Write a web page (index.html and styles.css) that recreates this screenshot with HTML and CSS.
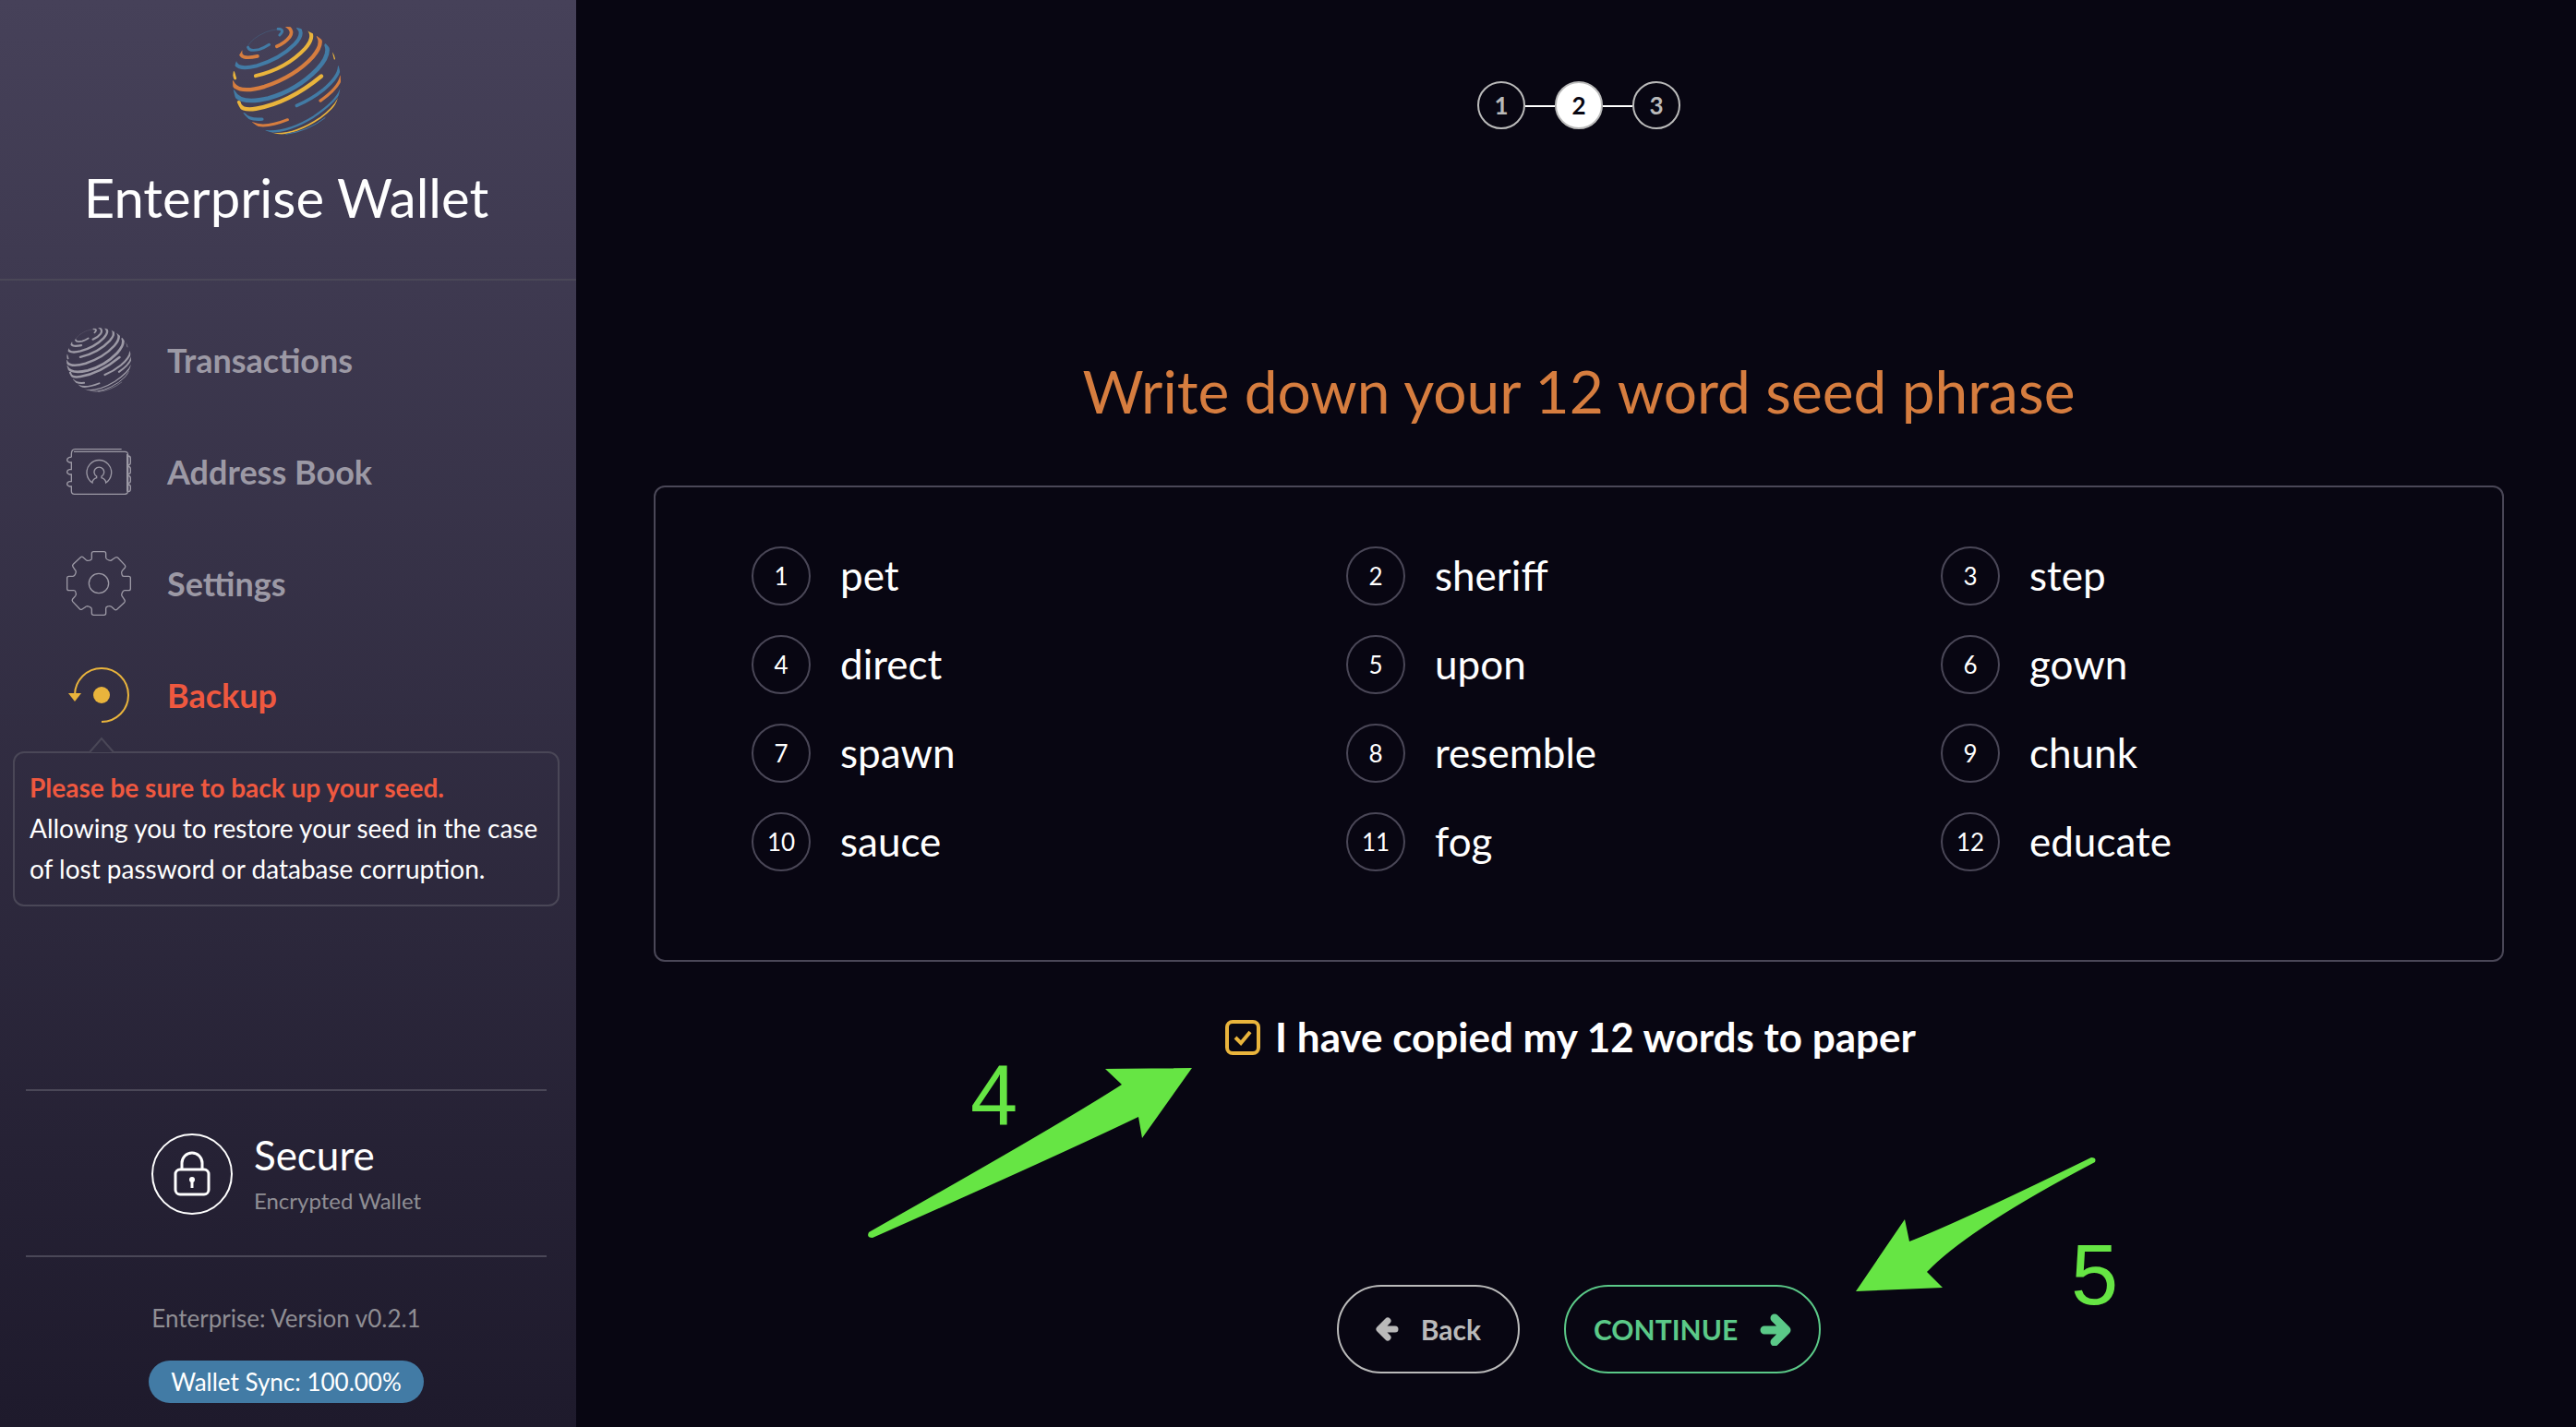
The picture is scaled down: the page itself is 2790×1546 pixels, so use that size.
FILE: index.html
```html
<!DOCTYPE html>
<html lang="en">
<head>
<meta charset="utf-8">
<title>Enterprise Wallet</title>
<link rel="stylesheet" href="styles.css">
</head>
<body>
<svg class="sprite" aria-hidden="true">
  <symbol id="globe" viewBox="36 27 352 352">
    <clipPath id="globe-clip"><circle cx="212" cy="203" r="176"/></clipPath>
    <g clip-path="url(#globe-clip)" fill="none" stroke-linecap="round" stroke-width="11">
      <path class="g-blue" stroke-width="1" d="M84 92Q98 64 145 44Q180 32 197 38"/>
      <path class="g-blue" stroke-width="9" d="M86 94Q90 108 122 101Q140 95 155 85"/>
      <path class="g-blue" stroke-width="9" d="M184 34Q208 36 189 54"/>
      <path class="g-orange" d="M212 24Q236 40 222 60Q207 80 180 91"/>
      <path class="g-orange" d="M62 106Q56 136 117 123"/>
      <path class="g-blue" stroke-width="12" d="M250 30Q270 50 238 84Q190 133 112 155Q50 170 42 140"/>
      <path class="g-yellow" stroke-width="12" d="M286 38Q304 62 272 98Q210 164 111 187"/>
      <path class="g-orange" stroke-width="13" d="M316 58Q332 85 297 125Q240 188 140 222Q52 248 34 208"/>
      <path class="g-blue" stroke-width="14" d="M342 88Q354 120 312 165Q244 235 152 260Q60 282 38 240"/>
      <path class="g-yellow" stroke-width="13" d="M56 274Q60 302 112 294Q220 275 325 188"/>
      <path class="g-blue" d="M384 158Q382 190 332 232Q292 264 245 284"/>
      <path class="g-orange" stroke-width="10" d="M390 190Q380 228 322 268"/>
      <path class="g-blue" stroke-width="10" d="M72 312Q90 332 132 328"/>
      <path class="g-orange" stroke-width="9" d="M100 342Q140 360 215 330"/>
      <path class="g-blue" stroke-width="7" d="M122 364Q200 382 300 320Q374 270 388 232"/>
      <path class="g-yellow" stroke-width="5" d="M165 375Q235 382 320 325Q365 292 380 262"/>
      <path class="g-blue" stroke-width="3" d="M210 377Q280 368 337 324"/>
      <path class="g-yellow" stroke-width="9" d="M38 176L44 195"/>
      <path class="g-yellow" stroke-width="4" d="M363 111L368 132"/>
    </g>
  </symbol>
</svg>

<div class="app">
  <aside class="sidebar">
    <header class="brand">
      <svg class="brand-logo" aria-hidden="true"><use href="#globe"/></svg>
      <h1 class="brand-name">Enterprise Wallet</h1>
    </header>

    <nav class="menu">
      <a class="menu-item" href="#transactions">
        <svg class="menu-icon mono" aria-hidden="true"><use href="#globe"/></svg>
        Transactions
      </a>
      <a class="menu-item" href="#addresses">
        <svg class="menu-icon" viewBox="36 408 210 210" fill="none" stroke="currentColor" stroke-width="4" aria-hidden="true">
          <path d="M52 466V456Q52 440 64 440H215"/>
          <path d="M60 448H226Q236 448 236 460V574Q236 586 226 586H62Q52 586 52 576V561H46Q38 559 38 553T46 545H52V522H46Q38 520 38 514T46 506H52V483H46Q38 481 38 475T46 466H52"/>
          <path d="M233 456V578M236 462Q244 462 244 470V484Q244 491 237 492M237 496Q244 497 244 504V514Q244 521 237 521M237 526Q244 527 244 534V543Q244 550 237 550M237 555Q244 556 244 562V570Q244 577 237 578"/>
          <path d="M120 549A40 40 0 1 1 164 549Q164 538 150 533V528A16 16 0 1 0 134 528V533Q120 538 120 549Z"/>
        </svg>
        Address Book
      </a>
      <a class="menu-item" href="#settings">
        <svg class="menu-icon" viewBox="36 774 210 210" fill="none" stroke="currentColor" stroke-width="4" aria-hidden="true">
          <g id="gear-quarter">
            <path d="M118 798V782Q118 776 124 776H158Q164 776 164 782V795Q165 802 178 805Q182 805 186 801L195 795Q199 792 203 796L226 820Q229 824 226 828L217 838Q213 843 216 850Q217 856 222 856"/>
          </g>
          <use href="#gear-quarter" transform="rotate(90 141 879)"/>
          <use href="#gear-quarter" transform="rotate(180 141 879)"/>
          <use href="#gear-quarter" transform="rotate(270 141 879)"/>
          <circle cx="141" cy="879" r="32"/>
        </svg>
        Settings
      </a>
      <a class="menu-item active" href="#backup" aria-current="page">
        <svg class="menu-icon backup" viewBox="0 0 70 70" aria-hidden="true">
          <path d="M38 64A29 29 0 1 0 9 35" fill="none" stroke="currentColor" stroke-width="2"/>
          <path d="M2 33H16L9 42Z" fill="currentColor"/>
          <circle cx="38" cy="35" r="9" fill="currentColor"/>
        </svg>
        Backup
      </a>
    </nav>

    <section class="notice">
      <svg class="notice-tip" viewBox="0 0 28 18" aria-hidden="true"><path d="M1 17L14 2L27 17" fill="#322e42" stroke="#4a4757" stroke-width="2"/></svg>
      <strong>Please be sure to back up your seed.</strong>
      <p>Allowing you to restore your seed in the case of lost password or database corruption.</p>
    </section>

    <footer class="status">
      <div class="secure">
        <svg class="secure-icon" viewBox="0 0 88 88" fill="none" stroke="currentColor" aria-hidden="true">
          <circle cx="44" cy="44" r="43" stroke-width="2"/>
          <rect x="26" y="39" width="36" height="27" rx="5" stroke-width="3"/>
          <path d="M33 39V32A11 11 0 0 1 55 32V39" stroke-width="3"/>
          <circle cx="44" cy="50" r="3" fill="currentColor" stroke="none"/>
          <path d="M44 50V59" stroke-width="3"/>
        </svg>
        <div class="secure-text">
          <span class="secure-title">Secure</span>
          <span class="secure-note">Encrypted Wallet</span>
        </div>
      </div>
      <div class="build">
        <span class="version">Enterprise: Version v0.2.1</span>
        <span class="sync">Wallet Sync: 100.00%</span>
      </div>
    </footer>
  </aside>

  <main class="content">
    <ol class="steps">
      <li class="step">1</li>
      <li class="step current" aria-current="step">2</li>
      <li class="step">3</li>
    </ol>

    <h2 class="title">Write down your 12 word seed phrase</h2>

    <ol class="seed">
      <li class="word"><span class="num">1</span><span class="term">pet</span></li>
      <li class="word"><span class="num">2</span><span class="term">sheriff</span></li>
      <li class="word"><span class="num">3</span><span class="term">step</span></li>
      <li class="word"><span class="num">4</span><span class="term">direct</span></li>
      <li class="word"><span class="num">5</span><span class="term">upon</span></li>
      <li class="word"><span class="num">6</span><span class="term">gown</span></li>
      <li class="word"><span class="num">7</span><span class="term">spawn</span></li>
      <li class="word"><span class="num">8</span><span class="term">resemble</span></li>
      <li class="word"><span class="num">9</span><span class="term">chunk</span></li>
      <li class="word"><span class="num">10</span><span class="term">sauce</span></li>
      <li class="word"><span class="num">11</span><span class="term">fog</span></li>
      <li class="word"><span class="num">12</span><span class="term">educate</span></li>
    </ol>

    <div class="confirm">
      <span class="check">
        <input class="check-box" type="checkbox" id="copied" checked>
        <svg class="check-mark" viewBox="0 0 38 38" aria-hidden="true"><path d="M11 19L17 25L27 13" fill="none" stroke="#e9b43c" stroke-width="4"/></svg>
      </span>
      <label for="copied">I have copied my 12 words to paper</label>
      <svg class="callout callout-check" viewBox="930 1110 370 240">
        <path d="M1291 1157L1197 1158L1215 1175Q1145 1220 941 1335Q938 1341 945 1341Q1150 1250 1233 1210L1237 1233Z"/>
        <text x="1051" y="1218">4</text>
      </svg>
    </div>

    <div class="actions">
      <button class="btn btn-back" type="button">
        <svg width="25" height="26" viewBox="0 0 25 26" fill="none" stroke="currentColor" stroke-width="7" stroke-linecap="round" stroke-linejoin="round" aria-hidden="true"><path d="M13 4L4 13L13 22M6 13H21"/></svg>
        Back
      </button>
      <button class="btn btn-next" type="button">
        CONTINUE
        <svg width="34" height="35" viewBox="0 0 34 35" fill="none" stroke="currentColor" stroke-width="9" stroke-linecap="round" stroke-linejoin="round" aria-hidden="true"><path d="M16 5L29 18L16 31M5 18H26"/></svg>
      </button>
      <svg class="callout callout-next" viewBox="2000 1240 310 210">
        <path d="M2010 1399L2063 1321L2068 1345Q2122 1324 2265 1254Q2271 1254 2269 1259Q2132 1331 2087 1378L2104 1395Z"/>
        <text x="2243" y="1413">5</text>
      </svg>
    </div>
  </main>
</div>
</body>
</html>
```
FILE: styles.css
```css
* { box-sizing: border-box; }

body {
  margin: 0;
  background: #080612;
  color: #fff;
  font-family: Lato, "Liberation Sans", sans-serif;
  font-size: 28px;
}

h1, h2, p, ol { margin: 0; padding: 0; font-weight: 400; }
ol { list-style: none; }

.sprite { position: absolute; width: 0; height: 0; }

.app {
  display: grid;
  grid-template-columns: 624px 1fr;
  column-gap: 6px;
  min-height: 100vh;
}

/* Sidebar */
.sidebar {
  display: flex;
  flex-direction: column;
  background: linear-gradient(#464159, #1e1a2c);
}

.brand {
  display: flex;
  flex-direction: column;
  align-items: center;
  gap: 33px;
  padding: 29px 4px 53px 0;
  border-bottom: 2px solid #4a4757;
}

.brand-logo {
  width: 117px;
  height: 117px;
  --blue: #427ba5;
  --orange: #d67d3f;
  --yellow: #e9b43c;
}

.mono {
  --blue: currentColor;
  --orange: currentColor;
  --yellow: currentColor;
}

.g-blue { stroke: var(--blue); }
.g-orange { stroke: var(--orange); }
.g-yellow { stroke: var(--yellow); }

.brand-name { font-size: 58px; line-height: 70px; }

.menu { padding: 25px 0 1px; }

.menu-item {
  display: flex;
  align-items: center;
  gap: 39px;
  height: 121px;
  padding-left: 72px;
  color: #9c99a5;
  font-size: 36px;
  font-weight: 700;
  text-decoration: none;
}

.menu-item.active { color: #ef583f; }
.menu-icon { width: 70px; height: 70px; }
.menu-icon.backup { color: #e9b43c; }

.notice {
  position: relative;
  margin: 0 18px 40px 14px;
  padding: 15px 8px 17px 16px;
  border: 2px solid #4a4757;
  border-radius: 12px;
  line-height: 44px;
}

.notice strong { color: #ef583f; }

.notice-tip {
  position: absolute;
  top: -18px;
  left: 80px;
  width: 28px;
  height: 18px;
}

.status { margin: auto 32px 0 28px; }

.secure {
  display: flex;
  align-items: center;
  justify-content: center;
  gap: 23px;
  height: 182px;
  padding-top: 2px;
  border: solid #4a4757;
  border-width: 2px 0;
}

.secure-icon { width: 88px; height: 88px; }
.secure-text { display: flex; flex-direction: column; gap: 8px; padding-bottom: 4px; }
.secure-title { font-size: 44px; line-height: 53px; }
.secure-note { color: #8f8e94; font-size: 24px; line-height: 29px; }

.build {
  display: flex;
  flex-direction: column;
  align-items: center;
  gap: 30px;
  padding: 51px 0 26px;
  font-size: 26px;
  line-height: 31px;
}

.version { color: #8f8e94; }

.sync {
  padding: 0 24px;
  border-radius: 23px;
  background: #427ba5;
  line-height: 46px;
}

/* Backup wizard */
.content { padding: 88px 78px 58px; }

.steps {
  display: flex;
  justify-content: center;
  align-items: center;
}

.step {
  width: 52px;
  height: 52px;
  border: 2px solid #bababa;
  border-radius: 50%;
  color: #bababa;
  font-size: 26px;
  font-weight: 700;
  line-height: 48px;
  text-align: center;
}

.step.current { background: #fff; color: #080612; }

.step + .step { position: relative; margin-left: 32px; }

.step + .step::before {
  content: "";
  position: absolute;
  top: 24px;
  right: 50px;
  width: 32px;
  height: 2px;
  background: #fff;
}

.title {
  margin: 245px 0 64px;
  color: #d67d3f;
  font-size: 64px;
  line-height: 77px;
  text-align: center;
}

.seed {
  display: grid;
  grid-template-columns: repeat(3, 1fr);
  row-gap: 32px;
  padding: 64px 34px 96px;
  border: 2px solid #4a4757;
  border-radius: 12px;
}

.word {
  display: flex;
  align-items: center;
  gap: 32px;
  height: 64px;
  padding-left: 70px;
}

.num {
  width: 64px;
  height: 64px;
  border: 2px solid #4a4757;
  border-radius: 50%;
  font-size: 26px;
  line-height: 60px;
  text-align: center;
}

.term { padding-bottom: 2px; font-size: 44px; line-height: 53px; }

.confirm {
  position: relative;
  display: flex;
  justify-content: center;
  align-items: center;
  gap: 16px;
  margin-top: 55px;
  padding-right: 18px;
  font-size: 44px;
  font-weight: 700;
  line-height: 53px;
}

.check { display: grid; }
.check-box, .check-mark { grid-area: 1 / 1; width: 38px; height: 38px; }

.check-box {
  appearance: none;
  margin: 0;
  border: 4px solid #e9b43c;
  border-radius: 8px;
}

.check-mark { visibility: hidden; pointer-events: none; }
.check-box:checked + .check-mark { visibility: visible; }

.actions {
  position: relative;
  display: flex;
  justify-content: center;
  gap: 48px;
  margin-top: 242px;
}

.btn {
  display: flex;
  align-items: center;
  gap: 24px;
  height: 96px;
  padding: 0 40px;
  border: 2px solid currentColor;
  border-radius: 48px;
  background: none;
  font: 700 30px Lato, "Liberation Sans", sans-serif;
}

.btn-back { color: #bababa; }
.btn-next { padding: 0 30px; color: #5bc988; }

/* Numbered callouts drawn over the wizard */
.callout {
  position: absolute;
  fill: #66e544;
  font: 92px "Liberation Sans", sans-serif;
  pointer-events: none;
}

.callout-check { top: 13px; left: calc(50% - 780px); width: 370px; height: 240px; }
.callout-next { top: -152px; left: calc(50% + 290px); width: 310px; height: 210px; }
```
